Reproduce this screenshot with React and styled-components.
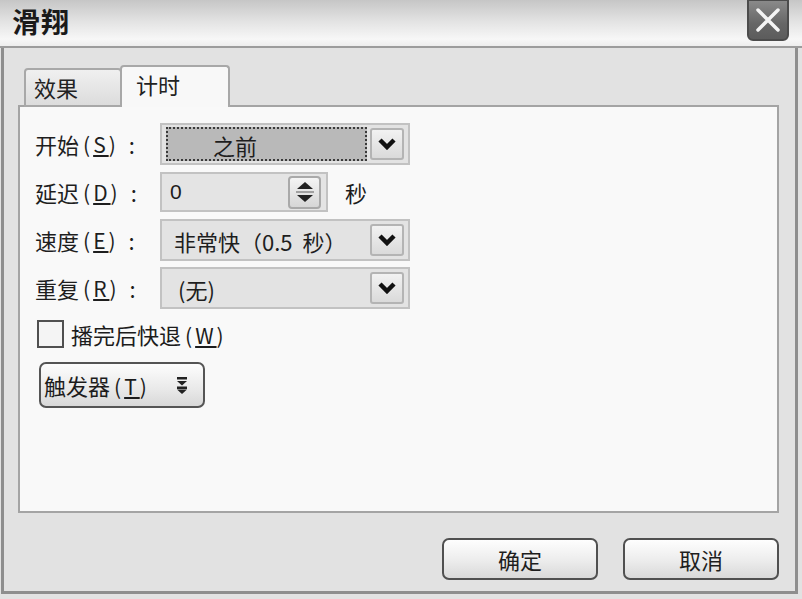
import React from "react";
import styled, { createGlobalStyle } from "styled-components";

const GlobalStyle = createGlobalStyle`
  html, body {
    margin: 0;
    padding: 0;
    background: #e2e2e2;
  }
  body {
    font-family: "Noto Sans CJK SC", "Noto Sans", sans-serif;
    color: #1c1c1c;
  }
`;

const Window = styled.div`
  width: 802px;
  height: 599px;
  display: flex;
  flex-direction: column;
  overflow: hidden;
  background: #e2e2e2;
`;

const TitleBar = styled.div`
  height: 46px;
  flex: none;
  display: flex;
  align-items: flex-start;
  justify-content: space-between;
  padding-left: 12px;
  padding-right: 13px;
  background: linear-gradient(#c6c6c6, #e2e2e2 45%, #f7f7f7 85%, #ededed);
  border-bottom: 2px solid #9c9c9c;
`;

const Title = styled.div`
  font-size: 28px;
  font-weight: 700;
  line-height: 42px;
  letter-spacing: 1px;
  color: #1a1a1a;
`;

const CloseButton = styled.div`
  width: 42px;
  height: 42px;
  margin-top: -1px;
  box-sizing: border-box;
  border: 2px solid #4c4c4c;
  border-radius: 0 0 6px 6px;
  background: linear-gradient(#8a8a8a, #666 60%, #5c5c5c);
  display: flex;
  align-items: center;
  justify-content: center;
`;

const Frame = styled.div`
  flex: none;
  width: 797px;
  height: 546px;
  box-sizing: border-box;
  margin-left: 1px;
  border: 3px solid #8e8e8e;
  border-top: none;
  padding: 17px 16px 0 14px;
  display: flex;
  flex-direction: column;
`;

const Tabs = styled.div`
  display: flex;
  align-items: flex-end;
  height: 42px;
  padding-left: 6px;
  margin-bottom: -2px;
  position: relative;
  z-index: 1;
`;

const Tab = styled.div`
  box-sizing: border-box;
  width: ${(p) => p.$w}px;
  height: ${(p) => (p.$active ? 42 : 39)}px;
  border: 2px solid #a8a8a8;
  border-bottom: ${(p) => (p.$active ? "none" : "2px solid #a8a8a8")};
  border-radius: 4px 4px 0 0;
  background: ${(p) => (p.$active ? "#f8f8f8" : "linear-gradient(#f0f0f0, #dcdcdc)")};
  font-size: 22px;
  line-height: 34px;
  padding-left: ${(p) => p.$pad}px;
  margin-left: ${(p) => (p.$active ? -2 : 0)}px;
  color: #222;
`;

const Panel = styled.div`
  box-sizing: border-box;
  height: 408px;
  border: 2px solid #a4a4a4;
  background: #f9f9f9;
  padding: 16px 0 0 15px;
  display: flex;
  flex-direction: column;
`;

const FormGrid = styled.div`
  display: grid;
  grid-template-columns: 125px 250px;
  grid-auto-rows: 42px;
  row-gap: 6px;
  align-items: center;
`;

const Label = styled.div`
  font-size: 22px;
  white-space: nowrap;
  color: #1e1e1e;
  display: flex;
  align-items: center;
`;

const Colon = styled.span`
  margin-left: 10px;
`;

const Combo = styled.div`
  box-sizing: border-box;
  height: 42px;
  border: 2px solid #c2c2c2;
  background: #e3e3e3;
  display: flex;
  align-items: center;
  padding: 2px 4px 2px 4px;
  gap: 3px;
`;

const ComboText = styled.div`
  flex: 1;
  align-self: stretch;
  box-sizing: border-box;
  font-size: 22px;
  line-height: 32px;
  padding-left: ${(p) => p.$pad || 8}px;
  white-space: pre;
  background: ${(p) => (p.$selected ? "#b9b9b9" : "transparent")};
  border: ${(p) => (p.$selected ? "2px dotted #3a3a3a" : "2px solid transparent")};
  color: #1e1e1e;
`;

const ArrowButton = styled.div`
  flex: none;
  box-sizing: border-box;
  width: 34px;
  height: 32px;
  border: 2px solid #b4b4b4;
  border-radius: 3px;
  background: linear-gradient(#f2f2f2, #dadada);
  display: flex;
  align-items: center;
  justify-content: center;
`;

const DelayRow = styled.div`
  display: flex;
  align-items: center;
  gap: 17px;
`;

const SpinInput = styled.div`
  box-sizing: border-box;
  width: 168px;
  height: 40px;
  border: 2px solid #c2c2c2;
  background: #e4e4e4;
  display: flex;
  align-items: center;
  justify-content: space-between;
  padding: 0 5px 0 8px;
  font-size: 21px;
  font-family: "Liberation Sans", "Noto Sans", sans-serif;
`;

const SpinButton = styled.div`
  box-sizing: border-box;
  width: 33px;
  height: 33px;
  border: 2px solid #a9a9a9;
  border-radius: 4px;
  background: linear-gradient(#f4f4f4, #d6d6d6);
  display: flex;
  align-items: center;
  justify-content: center;
`;

const Unit = styled.span`
  font-size: 22px;
`;

const CheckRow = styled.div`
  display: flex;
  align-items: center;
  gap: 7px;
  margin-top: 9px;
  margin-left: 2px;
  font-size: 22px;
`;

const CheckBox = styled.div`
  box-sizing: border-box;
  width: 27px;
  height: 28px;
  border: 2px solid #505050;
  background: #f4f4f4;
`;

const TriggerButton = styled.div`
  box-sizing: border-box;
  margin-top: 12px;
  margin-left: 4px;
  width: 166px;
  height: 46px;
  border: 2px solid #555;
  border-radius: 7px;
  background: linear-gradient(#fdfdfd, #e9e9e9 60%, #d8d8d8);
  display: flex;
  align-items: center;
  gap: 26px;
  padding-left: 3px;
  font-size: 22px;
`;

const Footer = styled.div`
  flex: 1;
  display: flex;
  justify-content: flex-end;
  align-items: flex-start;
  gap: 25px;
  padding-top: 25px;
`;

const DialogButton = styled.div`
  box-sizing: border-box;
  width: 156px;
  height: 42px;
  border: 2px solid #505050;
  border-radius: 7px;
  background: linear-gradient(#fefefe, #ececec 55%, #d9d9d9);
  display: flex;
  align-items: center;
  justify-content: center;
  font-size: 22px;
  color: #1e1e1e;
`;

const Key = styled.span`
  font-size: 21px;
  letter-spacing: 3px;
  margin-left: 4px;
  u {
    text-underline-offset: 2px;
  }
`;

const Mnemonic = ({ k }) => (
  <Key>
    (<u>{k}</u>)
  </Key>
);

const Chevron = () => (
  <svg width="18" height="12" viewBox="0 0 18 12">
    <path d="M2 2 L9 9 L16 2" fill="none" stroke="#111" strokeWidth="4.5" strokeLinejoin="miter" />
  </svg>
);

const SpinIcon = () => (
  <svg width="22" height="26" viewBox="0 0 22 26">
    <path d="M3 10 L11 3 L19 10 Z" fill="#222" />
    <line x1="2" y1="13" x2="20" y2="13" stroke="#8a8a8a" strokeWidth="1.5" />
    <path d="M3 16 L11 23 L19 16 Z" fill="#222" />
  </svg>
);

const DoubleDown = () => (
  <svg width="12" height="17" viewBox="0 0 12 17">
    <rect x="1" y="0" width="10" height="2.5" fill="#222" />
    <path d="M1 4 L11 4 L6 8.5 Z" fill="#222" />
    <rect x="1" y="9.5" width="10" height="2.5" fill="#222" />
    <path d="M1 12.5 L11 12.5 L6 17 Z" fill="#222" />
  </svg>
);

const CloseIcon = () => (
  <svg width="26" height="26" viewBox="0 0 26 26">
    <path d="M3 3 L23 23 M23 3 L3 23" stroke="#f4f4f4" strokeWidth="3.5" strokeLinecap="round" />
  </svg>
);

export default function App() {
  return (
    <>
      <GlobalStyle />
      <Window>
        <TitleBar>
          <Title>滑翔</Title>
          <CloseButton>
            <CloseIcon />
          </CloseButton>
        </TitleBar>
        <Frame>
          <Tabs>
            <Tab $w={98} $pad={8}>效果</Tab>
            <Tab $w={110} $pad={14} $active>计时</Tab>
          </Tabs>
          <Panel>
            <FormGrid>
              <Label>
                开始<Mnemonic k="S" /><Colon>:</Colon>
              </Label>
              <Combo>
                <ComboText $selected $pad={45}>之前</ComboText>
                <ArrowButton>
                  <Chevron />
                </ArrowButton>
              </Combo>

              <Label>
                延迟<Mnemonic k="D" /><Colon>:</Colon>
              </Label>
              <DelayRow>
                <SpinInput>
                  0
                  <SpinButton>
                    <SpinIcon />
                  </SpinButton>
                </SpinInput>
                <Unit>秒</Unit>
              </DelayRow>

              <Label>
                速度<Mnemonic k="E" /><Colon>:</Colon>
              </Label>
              <Combo>
                <ComboText $pad={6}>{"非常快（0.5  秒）"}</ComboText>
                <ArrowButton>
                  <Chevron />
                </ArrowButton>
              </Combo>

              <Label>
                重复<Mnemonic k="R" /><Colon>:</Colon>
              </Label>
              <Combo>
                <ComboText $pad={10}>(无)</ComboText>
                <ArrowButton>
                  <Chevron />
                </ArrowButton>
              </Combo>
            </FormGrid>

            <CheckRow>
              <CheckBox />
              <span>
                播完后快退<Mnemonic k="W" />
              </span>
            </CheckRow>

            <TriggerButton>
              <span>
                触发器<Mnemonic k="T" />
              </span>
              <DoubleDown />
            </TriggerButton>
          </Panel>
          <Footer>
            <DialogButton>确定</DialogButton>
            <DialogButton>取消</DialogButton>
          </Footer>
        </Frame>
      </Window>
    </>
  );
}
